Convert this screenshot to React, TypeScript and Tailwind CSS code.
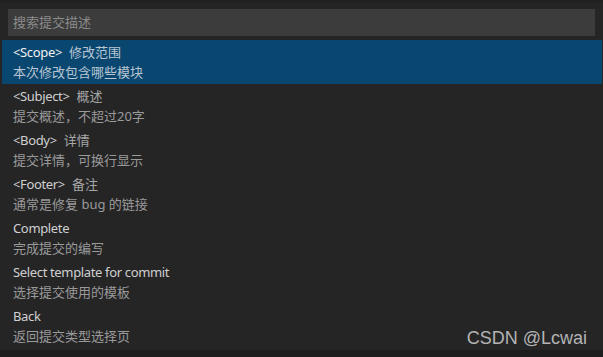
import React from "react";

const items = [
  { label: "<Scope>", desc: "修改范围", detail: "本次修改包含哪些模块", selected: true },
  { label: "<Subject>", desc: "概述", detail: "提交概述，不超过20字" },
  { label: "<Body>", desc: "详情", detail: "提交详情，可换行显示" },
  { label: "<Footer>", desc: "备注", detail: "通常是修复 bug 的链接" },
  { label: "Complete", desc: "", detail: "完成提交的编写" },
  { label: "Select template for commit", desc: "", detail: "选择提交使用的模板" },
  { label: "Back", desc: "", detail: "返回提交类型选择页" },
];

export default function App() {
  return (
    <div
      className="relative w-[603px] h-[357px] overflow-hidden bg-[#1e1e1e] text-[13px]"
      style={{ fontFamily: '"Noto Sans", "Noto Sans CJK SC", sans-serif' }}
    >
      <div className="flex flex-col h-[350px] bg-[#252526]">
        <div className="h-[4px] bg-gradient-to-b from-[#1f1f1f] to-[#252526]" />
        <div className="px-[8px] pt-[5px] pb-[4px]">
          <div className="h-[27px] bg-[#3c3c3c] flex items-center pl-[5px] text-[#8b8b8b]">
            搜索提交描述
          </div>
        </div>
        <div className="flex flex-col pl-[2px] pr-[1px]">
          {items.map((it) => (
            <div
              key={it.label}
              className={
                "h-[44px] flex flex-col pl-[11px] " +
                (it.selected ? "bg-[#094771]" : "")
              }
            >
              <div className="h-[22px] leading-[22px] pt-[2px] flex items-center gap-[7px] whitespace-nowrap">
                <span
                  className={
                    "tracking-[-0.35px] " +
                    (it.selected ? "text-[#f0f0f0]" : "text-[#d0d0d0]")
                  }
                >
                  {it.label}
                </span>
                {it.desc && (
                  <span className={it.selected ? "text-[#b9c6d2]" : "text-[#a6a6a6]"}>
                    {it.desc}
                  </span>
                )}
              </div>
              <div
                className={
                  "h-[22px] leading-[20px] whitespace-nowrap " +
                  (it.selected ? "text-[#b9c6d2]" : "text-[#9a9a9a]")
                }
              >
                {it.detail}
              </div>
            </div>
          ))}
        </div>
      </div>
      <div
        className="absolute right-[16px] bottom-[9px] text-[18px] leading-[20px] text-[#b4b4b4]"
        style={{ fontFamily: '"Liberation Sans", Arial, sans-serif' }}
      >
        CSDN @Lcwai
      </div>
    </div>
  );
}
